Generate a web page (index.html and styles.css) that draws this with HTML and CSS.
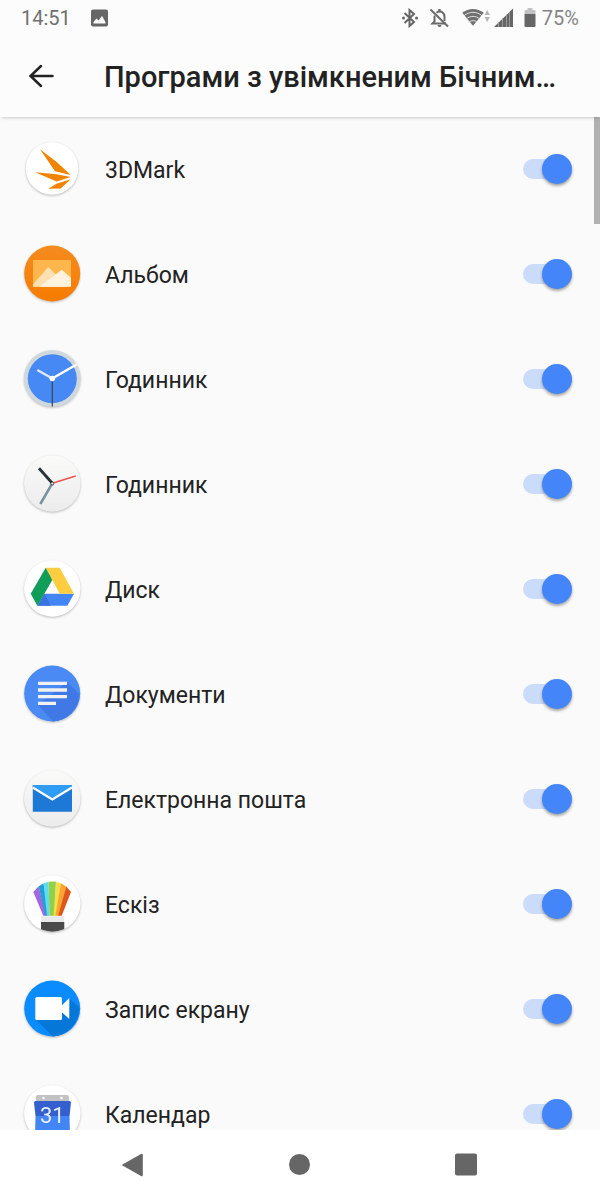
FILE: index.html
```html
<!DOCTYPE html>
<html lang="uk">
<head>
  <meta charset="UTF-8">
  <meta name="viewport" content="width=device-width, initial-scale=1.0">
  <title>Бічний сенсор</title>
  <link rel="stylesheet" href="styles.css">
</head>
<body>

<div class="status-bar">
  <span class="time">14:51</span>
  <svg class="notification" width="18" height="18" viewBox="0 0 18 18">
    <rect x="0" y="0.500" width="17" height="17" rx="2" fill="#666"/>
    <path d="M2.500 14.500V13l3-3.500 2 2L11 7l3.500 6v1.500z" fill="#fcfcfc"/>
  </svg>
  <div class="status-icons">
    <!-- bluetooth -->
    <svg width="24" height="20" viewBox="0 0 24 20">
      <path d="M5.500 5l9.500 9-4.500 4V2L15 6l-9.500 9" fill="none" stroke="#666" stroke-width="2"/>
      <circle cx="4.500" cy="10" r="1.500" fill="#666"/>
      <circle cx="17.500" cy="10" r="1.500" fill="#666"/>
    </svg>
    <!-- sound off -->
    <svg width="24" height="20" viewBox="0 0 24 20">
      <path d="M5.500 7.500v6l-2 2h13.500M7.500 4.700C12 1.500 15.500 5 15.500 9v4" fill="none" stroke="#6b6b6b" stroke-width="2"/>
      <path d="M9.300 3V1h2.400v2zM8.500 17h4a2 2 0 0 1-4 0z" fill="#6b6b6b"/>
      <path d="M1.500 1.500l17.500 17" stroke="#6b6b6b" stroke-width="2"/>
    </svg>
    <!-- wifi and mobile signal -->
    <svg width="59" height="20" viewBox="0 0 59 20">
      <path d="M14 17.800L3.200 4.800C9.500-.3 18.500-.3 24.800 4.800z" fill="#707070"/>
      <path d="M5 7.700c5.500-4.500 12.500-4.500 18 0M7 11c4.500-3.500 9.500-3.500 14 0M9.500 14.200c3-2 6-2 9 0" fill="none" stroke="#e2e2e2" stroke-width="1"/>
      <path d="M25.500 7l2.700-5 2.700 5zM25.500 9l2.700 5 2.700-5z" fill="#b5b5b5"/>
      <path d="M35 19L54 .5V19z" fill="#666"/>
      <path d="M39.500 14.600V19M43.500 10.700V19M47.500 6.800V19M50.500 3.900V19" stroke="#999" stroke-width="1"/>
    </svg>
    <svg width="12" height="20" viewBox="0 0 12 20">
      <path d="M0.500 6V3q0-1 1-1h2V0h5v2h2q1 0 1 1v3z" fill="#c2c2c2"/>
      <path d="M0.500 6h11v12q0 1-1 1h-9q-1 0-1-1z" fill="#666"/>
    </svg>
    <span class="battery-level">75%</span>
  </div>
</div>

<header class="toolbar">
  <button class="back" aria-label="Назад">
    <svg width="26" height="26" viewBox="0 0 26 26">
      <path d="M24.500 12H3M13 2L2.500 12 13 22" fill="none" stroke="#222" stroke-width="2.500" stroke-linecap="round"/>
    </svg>
  </button>
  <h1>Програми з увімкненим Бічним…</h1>
</header>

<main>
  <ul class="apps">
    <li>
      <label class="app">
        <svg class="icon" viewBox="0 0 60 60">
          <circle cx="30" cy="29.500" r="26.300" fill="#fff"/>
          <path d="M18 10.300l17 13L48.700 36 33 32.300zM13 33.300l21.500 1.900L48.700 38l-14 4.500zM26.300 49.700l8.200-5 14.200-4.500-10 9.200z" fill="#f08300"/>
        </svg>
        <span class="name">3DMark</span>
        <input type="checkbox" class="switch" checked>
      </label>
    </li>
    <li>
      <label class="app">
        <svg class="icon" viewBox="0 0 60 60">
          <defs>
            <linearGradient id="orange" x1="0" y1="0" x2="0" y2="1">
              <stop offset="0" stop-color="#f58b1f"/>
              <stop offset="1" stop-color="#f77c00"/>
            </linearGradient>
          </defs>
          <circle cx="30.200" cy="29.500" r="28" fill="url(#orange)"/>
          <path d="M11 16h38v26.700H11z" fill="#ffb74d"/>
          <path d="M11 40.500L26.300 23 46 42.700H11z" fill="#ffe0b2"/>
          <path d="M17.700 42.700l22-17 9.300 8v9z" fill="#fff3e0"/>
        </svg>
        <span class="name">Альбом</span>
        <input type="checkbox" class="switch" checked>
      </label>
    </li>
    <li>
      <label class="app">
        <svg class="icon" viewBox="0 0 60 60">
          <circle cx="30.300" cy="29.500" r="28.300" fill="#cfd8dc"/>
          <circle cx="30.300" cy="29.700" r="24.500" fill="#4688f4"/>
          <path d="M30.300 30v27.500" stroke="#37474f" stroke-width="1.200"/>
          <path d="M30.300 29.500L15.300 21" stroke="#dde8fd" stroke-width="2.500"/>
          <path d="M30.300 29.500L54.500 15.500" stroke="#fff" stroke-width="2.500"/>
          <circle cx="30.300" cy="29.500" r="2.800" fill="#fff"/>
        </svg>
        <span class="name">Годинник</span>
        <input type="checkbox" class="switch" checked>
      </label>
    </li>
    <li>
      <label class="app">
        <svg class="icon" viewBox="0 0 60 60">
          <defs>
            <linearGradient id="plate" x1="0" y1="0" x2="0" y2="1">
              <stop offset="0" stop-color="#fafaf9"/>
              <stop offset="1" stop-color="#ececec"/>
            </linearGradient>
          </defs>
          <circle cx="30.300" cy="29.500" r="28.200" fill="url(#plate)"/>
          <path d="M30.300 29.300L18.300 50" stroke="#78909c" stroke-width="2.500"/>
          <path d="M30.300 29.300L17 14.300" stroke="#263238" stroke-width="2.800"/>
          <path d="M30.300 29.300L53.700 22" stroke="#ef5350" stroke-width="1.500"/>
          <circle cx="30.300" cy="29.500" r="1.500" fill="#fff" stroke="#263238"/>
        </svg>
        <span class="name">Годинник</span>
        <input type="checkbox" class="switch" checked>
      </label>
    </li>
    <li>
      <label class="app">
        <svg class="icon" viewBox="0 0 60 60">
          <circle cx="30.300" cy="29.500" r="28.200" fill="#fff"/>
          <path d="M22.300 34.700H52l-6.700 12h-30z" fill="#4285f4"/>
          <path d="M22.300 34.700l6.500 12H15.300z" fill="#3a72e0"/>
          <path d="M23.700 8.700h14L52 34.700H37.700z" fill="#ffcd40"/>
          <path d="M23.700 8.700L30.300 21l-15 25.700-6.600-12z" fill="#0f9d58"/>
        </svg>
        <span class="name">Диск</span>
        <input type="checkbox" class="switch" checked>
      </label>
    </li>
    <li>
      <label class="app">
        <svg class="icon" viewBox="0 0 60 60">
          <circle cx="30.200" cy="29.500" r="28" fill="#4a8af4"/>
          <path d="M45 18l12.300 12A28 28 0 0 1 31 57.500L16 41z" fill="#4079e6"/>
          <path d="M16 17.700h29V21H16zM16 24.300h29v3.400H16zM16 31h29v3.300H16zM16 37.700h18V41H16z" fill="#f1f1f1"/>
        </svg>
        <span class="name">Документи</span>
        <input type="checkbox" class="switch" checked>
      </label>
    </li>
    <li>
      <label class="app">
        <svg class="icon" viewBox="0 0 60 60">
          <circle cx="30.300" cy="29.500" r="28.200" fill="url(#plate)"/>
          <path d="M10.800 16H50v26.700H10.800z" fill="#1e78d6"/>
          <path d="M10.800 16H50v2.500L30.300 30.500 10.800 18.500z" fill="#2f9cf5"/>
          <path d="M10.800 18.500l19.500 12L50 18.500" fill="none" stroke="#fff" stroke-width="2.200"/>
        </svg>
        <span class="name">Електронна пошта</span>
        <input type="checkbox" class="switch" checked>
      </label>
    </li>
    <li>
      <label class="app">
        <svg class="icon" viewBox="0 0 60 60">
          <defs>
            <clipPath id="disc"><circle cx="30.300" cy="29.500" r="28.200"/></clipPath>
          </defs>
          <circle cx="30.300" cy="29.500" r="28.200" fill="#fff"/>
          <path d="M11.300 18l5.200-5.500 8 29.300h-3.200z" fill="#a366e0"/>
          <path d="M16.500 12.500l5-3.200 5.500 32.500h-3.500z" fill="#22a0d6"/>
          <path d="M21.500 9.300l5-1.500 1 34h-2.500z" fill="#5fdcee"/>
          <path d="M26.500 7.800q4-.5 7.500 0l-1.500 34h-5z" fill="#8fd14f"/>
          <path d="M34 7.800l5 1.500-5 32.500h-2.500z" fill="#f5e04a"/>
          <path d="M39 9.300l5.300 3.200-7 29.300h-4z" fill="#fba42f"/>
          <path d="M44.300 12.500L49 18l-9.300 23.800h-3.500z" fill="#dd571c"/>
          <g clip-path="url(#disc)">
            <path d="M19 42.300h23.300V48H19z" fill="#e9e9e9"/>
            <path d="M19 48h23.300v11H19z" fill="#4a4a4a"/>
          </g>
        </svg>
        <span class="name">Ескіз</span>
        <input type="checkbox" class="switch" checked>
      </label>
    </li>
    <li>
      <label class="app">
        <svg class="icon" viewBox="0 0 60 60">
          <circle cx="30.200" cy="29.500" r="28" fill="#0a8cff"/>
          <path d="M47.300 19.500l9.800 9A28 28 0 0 1 31 57.500L14 41z" fill="#0577d9"/>
          <rect x="13.300" y="18" width="26.700" height="23" rx="1.500" fill="#fff"/>
          <path d="M39 27l8.300-8v21L39 32.500z" fill="#fff"/>
        </svg>
        <span class="name">Запис екрану</span>
        <input type="checkbox" class="switch" checked>
      </label>
    </li>
    <li>
      <label class="app">
        <svg class="icon" viewBox="0 0 60 60">
          <circle cx="30.300" cy="29.500" r="28.200" fill="#fff"/>
          <path d="M14 17v-4q0-2 2-2h29q2 0 2 2v4z" fill="#c2c2c2"/>
          <circle cx="21.500" cy="14" r="1.300" fill="#fff"/>
          <circle cx="39.500" cy="14" r="1.300" fill="#fff"/>
          <path d="M12 18.500q0-1.500 1.500-1.500h34q1.500 0 1.500 1.500l-1.500 13.500h-34z" fill="#3460cf"/>
          <path d="M13.500 32h34l.5 21H13z" fill="#4285f4"/>
          <text class="day" x="30.300" y="39" text-anchor="middle">31</text>
        </svg>
        <span class="name">Календар</span>
        <input type="checkbox" class="switch" checked>
      </label>
    </li>
  </ul>
  <div class="scroll-thumb"></div>
</main>

<nav class="nav-bar">
  <button aria-label="Назад">
    <svg width="24" height="24" viewBox="0 0 24 24"><path d="M1.500 11.500L20 1q1.800-.8 1.800 1v20q0 1.800-1.800 1L1.500 12.500q-.8-.5 0-1z" fill="#666"/></svg>
  </button>
  <button aria-label="Додому">
    <svg width="24" height="24" viewBox="0 0 24 24"><circle cx="11.500" cy="11.500" r="10.500" fill="#666"/></svg>
  </button>
  <button aria-label="Останні програми">
    <svg width="24" height="24" viewBox="0 0 24 24"><rect x="0" y="0.500" width="22" height="22" rx="2" fill="#666"/></svg>
  </button>
</nav>

</body>
</html>
```
FILE: styles.css
```css
* {
  box-sizing: border-box;
}

body {
  font-family: Roboto, sans-serif;
  display: flex;
  flex-direction: column;
  height: 100vh;
  margin: 0;
  background: #fafafa;
  color: #222;
}

svg {
  display: block;
}

button {
  display: flex;
  align-items: center;
  justify-content: center;
  padding: 0;
  border: 0;
  background: none;
  cursor: pointer;
}

.status-bar {
  display: flex;
  align-items: center;
  height: 36px;
  padding: 0 21px;
  background: #fcfcfc;
  font-size: 20px;
  color: #707070;
}

.notification {
  margin-left: 20px;
}

.status-icons {
  display: flex;
  align-items: center;
  gap: 6px;
  margin-left: auto;
}

.battery-level {
  color: #858585;
}

.toolbar {
  position: relative;
  z-index: 1;
  display: flex;
  align-items: center;
  gap: 50px;
  height: 81px;
  padding: 0 28px;
  background: #fcfcfc;
  box-shadow: 0 3px 3px -2px rgba(0, 0, 0, 0.2);
}

h1 {
  margin: 0;
  font-size: 29px;
  font-weight: 500;
  white-space: nowrap;
}

main {
  position: relative;
  flex: 1;
  min-height: 0;
  overflow: hidden;
}

.apps {
  margin: 0;
  padding: 0;
  list-style: none;
}

.app {
  display: flex;
  align-items: center;
  height: 105px;
  padding: 0 28px 1px 22px;
}

.icon {
  width: 60px;
  height: 60px;
  filter: drop-shadow(0 1px 1px rgba(0, 0, 0, 0.25));
}

.day {
  font-size: 22px;
  fill: #e8eefc;
}

.name {
  flex: 1;
  margin-left: 23px;
  padding-top: 2px;
  font-size: 23px;
}

.switch {
  appearance: none;
  position: relative;
  width: 49px;
  height: 30px;
  margin: 0;
}

.switch::before {
  content: "";
  position: absolute;
  top: 5px;
  left: 0;
  width: 100%;
  height: 20px;
  border-radius: 10px;
  background: #ccc;
}

.switch::after {
  content: "";
  position: absolute;
  top: 0;
  left: 0;
  width: 30px;
  height: 30px;
  border-radius: 50%;
  background: #fff;
  box-shadow: 0 2px 3px rgba(0, 0, 0, 0.35);
}

.switch:checked::before {
  background: #cbdcfb;
}

.switch:checked::after {
  left: auto;
  right: 0;
  background: #4486f9;
}

.scroll-thumb {
  position: absolute;
  top: 0;
  right: 0;
  width: 6px;
  height: 107px;
  background: #b1b1b1;
}

.nav-bar {
  display: grid;
  grid-template-columns: repeat(3, 1fr);
  height: 70px;
  padding: 0 49px;
  background: #fff;
}
```
